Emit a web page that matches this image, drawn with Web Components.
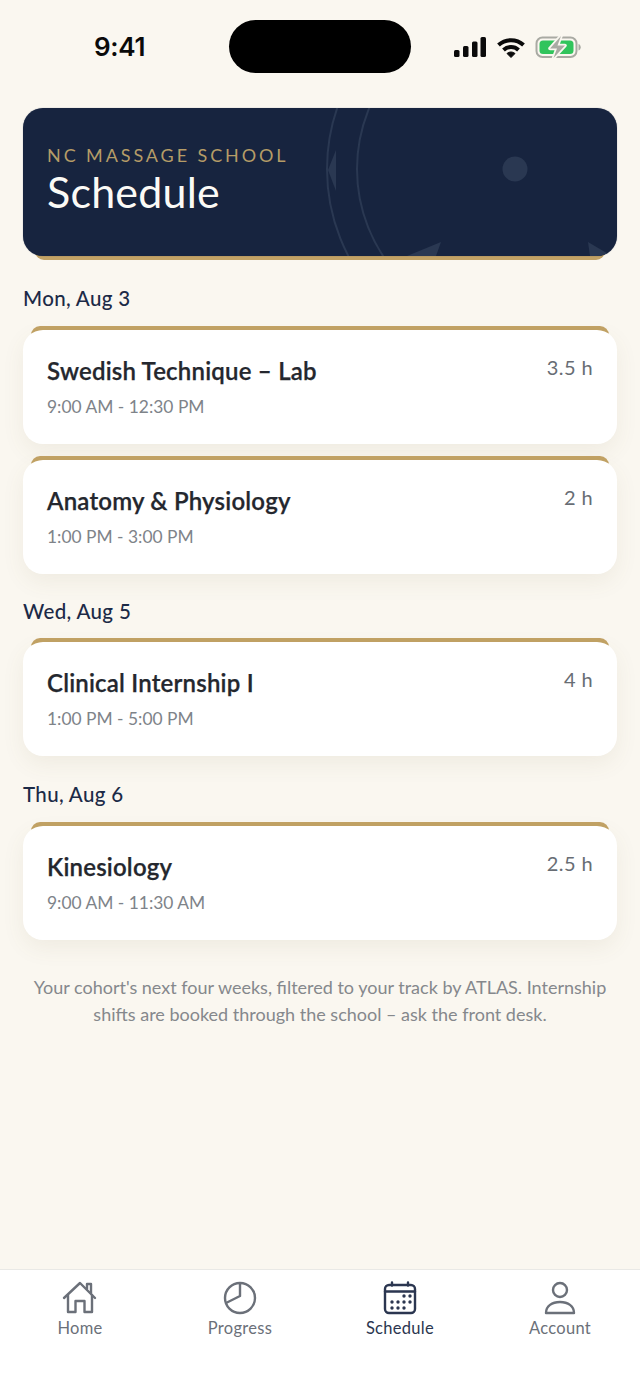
<!DOCTYPE html>
<html lang="en"><head><meta charset="utf-8"><title>Schedule</title>
<style>
html,body{margin:0;padding:0;background:#faf7f0}
body{width:640px;height:1390px;overflow:hidden;font-family:Lato,"Noto Sans",sans-serif}
</style></head><body>
<template id="t-app"><style>
:host{display:flex;flex-direction:column;width:640px;height:1390px;background:#faf7f0}
main{flex:1;display:flex;flex-direction:column;padding:0 23px}
</style><slot name="status"></slot><main><slot></slot></main><slot name="tabs"></slot></template>

<template id="t-status"><style>
:host{display:block;height:108px;position:relative}
.time{position:absolute;left:94px;top:32px;font:600 26px/30px Inter,"Liberation Sans",sans-serif;letter-spacing:-.3px;color:#0a0a0a}
.pill{position:absolute;left:229px;top:20px;width:182px;height:53px;border-radius:27px;background:#000}
svg{position:absolute;left:452px;top:34px}
</style><span class="time">9:41</span><div class="pill"></div>
<svg width="132" height="26" viewBox="0 0 132 26">
<g fill="#0a0a0a"><rect x="2" y="16" width="5.500" height="7" rx="1.500"/><rect x="11" y="12" width="5.500" height="11" rx="1.500"/><rect x="20" y="7.500" width="5.500" height="15.500" rx="1.500"/><rect x="28.500" y="3" width="5.500" height="20" rx="1.500"/></g>
<g fill="none" stroke="#0a0a0a" stroke-width="4"><path d="M46.500 11a18.500 18.500 0 0 1 25 0"/><path d="M51.500 16a11 11 0 0 1 15 0"/></g><path d="M55 19.500a6 6 0 0 1 8 0L59 23.500z" fill="#0a0a0a" stroke="#0a0a0a" stroke-linejoin="round"/>
<rect x="84.500" y="3.500" width="40" height="19.500" rx="6" fill="none" stroke="#a9aaa3" stroke-width="2"/>
<rect x="87.500" y="6.500" width="34" height="13.500" rx="3.500" fill="#31c45c"/>
<path d="M126.500 10v6.500c1.500-.5 2.200-1.800 2.200-3.200s-.7-2.800-2.200-3.300z" fill="#a9aaa3"/>
<path d="M109 2 98 14.500h7l-3.500 9.500L113 11.500h-7.500z" fill="#a9aaa3" stroke="#faf7f0" stroke-width="3.500" stroke-linejoin="round" paint-order="stroke"/>
</svg></template>

<template id="t-hero"><style>
:host{display:block;position:relative;height:152px}
.gold{position:absolute;left:12px;right:12px;bottom:0;height:12px;border-radius:0 0 9px 9px;background:#c2a265}
.box{position:relative;height:148px;box-sizing:border-box;border-radius:20px;background:#17243f;overflow:hidden;padding:36px 24px 0;box-shadow:0 0 1px rgba(23,36,63,.5)}
.k{font:400 18px/22px Lato,sans-serif;letter-spacing:2.900px;color:#b59c67}
h1{margin:1px 0 0;font:400 43px/50px Lato,sans-serif;color:#fbfaf6;letter-spacing:.2px}
svg{position:absolute;left:0;top:0}
.c{position:relative}
</style><div class="gold"></div><div class="box"><svg width="594" height="148" viewBox="0 0 594 148" fill="none">
<g stroke="#2a3852" stroke-width="2"><circle cx="492" cy="61" r="158"/><circle cx="492" cy="61" r="188"/></g>
<g fill="#2a3852"><circle cx="492" cy="61" r="12.500"/><path d="M313 42 305 62l8 21z"/><path d="M418 134l-34 14h29z"/><path d="M565 134l22 13-8 1h-12z"/></g>
</svg><div class="c"><div class="k">NC MASSAGE SCHOOL</div><h1>Schedule</h1></div></div></template>

<template id="t-day"><style>
:host{display:block;font:500 20.500px/26px Lato,sans-serif;color:#1c2a47;letter-spacing:.35px}
</style><slot></slot></template>

<template id="t-card"><style>
:host{display:block;position:relative;height:118px}
.gold{position:absolute;left:8px;right:8px;top:0;height:12px;border-radius:9px 9px 0 0;background:#c2a265}
.box{position:absolute;left:0;right:0;top:4px;bottom:0;box-sizing:border-box;border-radius:20px;background:#fff;padding:25px 24px 0;box-shadow:0 8px 22px rgba(120,100,60,.08);display:flex;justify-content:space-between}
.t{font:600 24px/32px Lato,sans-serif;color:#24272e;letter-spacing:.2px;-webkit-text-stroke:.25px #24272e}
.s{font:400 17.400px/24px Lato,sans-serif;color:#7e8389;margin-top:8px}
.h{font:400 20px/26px Lato,sans-serif;color:#686d74;margin-top:-1px;letter-spacing:.4px}
</style><div class="gold"></div><div class="box"><div><div class="t"><slot name="title"></slot></div><div class="s"><slot name="time"></slot></div></div><div class="h"><slot name="hours"></slot></div></div></template>

<template id="t-note"><style>
:host{display:block;text-align:center;font:400 18px/27px Lato,sans-serif;color:#85888c;white-space:nowrap}
</style><slot></slot></template>

<template id="t-tabs"><style>
:host{display:grid;grid-template-columns:repeat(4,1fr);height:121px;box-sizing:border-box;background:#fff;border-top:1px solid #e9e9e6;padding-top:10px}
</style><slot></slot></template>

<template id="t-tab"><style>
:host{display:flex;flex-direction:column;align-items:center;color:#6b7079;font:400 16.500px/22px Lato,sans-serif;letter-spacing:.3px}
:host([active]){color:#2b3650}
.i{height:37px}
</style><div class="i"><slot name="icon"></slot></div><slot></slot></template>

<x-app>
<x-status slot="status"></x-status>
<x-hero></x-hero>
<x-day style="margin-top:25px;margin-bottom:15px">Mon, Aug 3</x-day>
<x-card><span slot="title">Swedish Technique – Lab</span><span slot="time">9:00 AM - 12:30 PM</span><span slot="hours">3.5 h</span></x-card>
<x-card style="margin-top:12px"><span slot="title">Anatomy &amp; Physiology</span><span slot="time">1:00 PM - 3:00 PM</span><span slot="hours">2 h</span></x-card>
<x-day style="margin-top:24px;margin-bottom:14px">Wed, Aug 5</x-day>
<x-card><span slot="title">Clinical Internship I</span><span slot="time">1:00 PM - 5:00 PM</span><span slot="hours">4 h</span></x-card>
<x-day style="margin-top:25px;margin-bottom:15px">Thu, Aug 6</x-day>
<x-card><span slot="title">Kinesiology</span><span slot="time">9:00 AM - 11:30 AM</span><span slot="hours">2.5 h</span></x-card>
<x-note style="margin-top:34px">Your cohort's next four weeks, filtered to your track by ATLAS. Internship<br>shifts are booked through the school – ask the front desk.</x-note>
<x-tabs slot="tabs">
<x-tab><svg slot="icon" width="36" height="36" viewBox="0 0 36 36" fill="none" stroke="currentColor" stroke-width="2.400" stroke-linejoin="round" stroke-linecap="round"><path d="M2 18 18 3l15 15"/><path d="M6 15v17h7.500V21h9v11H30V15"/><path d="M25 9V4h4v9"/></svg>Home</x-tab>
<x-tab><svg slot="icon" width="36" height="36" viewBox="0 0 36 36" fill="none" stroke="currentColor" stroke-width="2.400" stroke-linejoin="round"><circle cx="18" cy="18" r="15"/><path d="M18 3v13L4 23"/></svg>Progress</x-tab>
<x-tab active><svg slot="icon" width="36" height="36" viewBox="0 0 36 36" fill="none" stroke="currentColor" stroke-width="2.400" stroke-linecap="round"><rect x="3" y="5" width="30" height="28" rx="4"/><path d="M3 11.500h30M10 2.500v3M26 2.500v3"/><g fill="currentColor" stroke="none"><circle cx="22" cy="16" r="1.700"/><circle cx="28" cy="16" r="1.700"/><circle cx="10" cy="22" r="1.700"/><circle cx="16" cy="22" r="1.700"/><circle cx="22" cy="22" r="1.700"/><circle cx="28" cy="22" r="1.700"/><circle cx="10" cy="28" r="1.700"/><circle cx="16" cy="28" r="1.700"/><circle cx="22" cy="28" r="1.700"/></g></svg>Schedule</x-tab>
<x-tab><svg slot="icon" width="36" height="36" viewBox="0 0 36 36" fill="none" stroke="currentColor" stroke-width="2.400" stroke-linejoin="round"><circle cx="18" cy="10" r="7"/><path d="M4 33c0-7 6-11 14-11s14 4 14 11z"/></svg>Account</x-tab>
</x-tabs>
</x-app>
<script>
for (const [tag, id] of [['x-app','t-app'],['x-status','t-status'],['x-hero','t-hero'],['x-day','t-day'],['x-card','t-card'],['x-note','t-note'],['x-tabs','t-tabs'],['x-tab','t-tab']]) {
  customElements.define(tag, class extends HTMLElement {
    constructor(){super();this.attachShadow({mode:'open'}).appendChild(document.getElementById(id).content.cloneNode(true));}
  });
}
</script>
</body></html>
